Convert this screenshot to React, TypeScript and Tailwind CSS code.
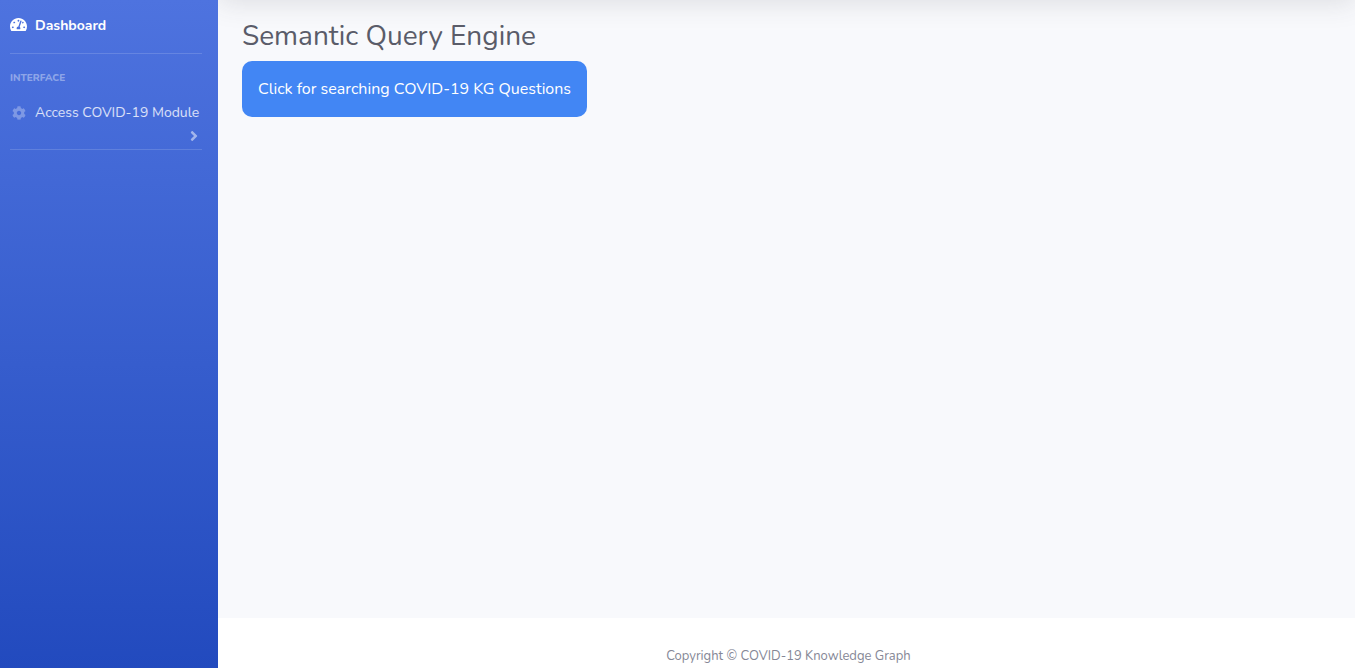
import { FaTachometerAlt, FaCog, FaAngleRight } from "react-icons/fa";

export default function App() {
  return (
    <div className="flex min-h-screen bg-[#f8f9fc] font-['Nunito','Open_Sans',sans-serif]">
      <aside className="w-[218px] shrink-0 bg-linear-to-b from-[#4e73df] to-[#224abe] px-[10px] text-white">
        <nav className="pr-[6px]">
          <a href="#dashboard" className="flex h-[53px] items-center gap-2 pb-[2px] text-sm font-bold">
            <FaTachometerAlt className="mb-[2px] size-[17px]" />
            <span>Dashboard</span>
          </a>
          <hr className="border-white/15" />
          <h2 className="pt-4 text-[10px] leading-4 font-extrabold text-white/40 uppercase">Interface</h2>
          <button type="button" className="block w-full pt-[15px] pb-[2px] text-left text-sm whitespace-nowrap text-white/80">
            <span className="flex h-6 items-center gap-2">
              <FaCog className="mr-px ml-[2px] size-[14px] text-white/30" />
              <span>Access COVID-19 Module</span>
            </span>
            <span className="flex h-[22px] items-center justify-end text-white/50">
              <FaAngleRight className="size-4" />
            </span>
          </button>
          <hr className="border-white/15" />
        </nav>
      </aside>
      <div className="flex min-w-0 grow flex-col overflow-hidden">
        <header className="-mt-[70px] h-[70px] shrink-0 bg-white shadow-[0_2px_28px_0_rgba(58,59,69,0.15)]" />
        <main className="grow px-6 pt-[19px]">
          <h1 className="text-[28px] leading-[34px] font-normal text-[#5a5c69]">Semantic Query Engine</h1>
          <button type="button" className="mt-2 h-14 rounded-[10px] bg-[#4286f4] px-4 text-base text-white">
            Click for searching COVID-19 KG Questions
          </button>
        </main>
        <footer className="h-[50px] bg-white pt-[30px] pl-1 text-center text-[13px] leading-4 text-[#858796]">
          Copyright © COVID-19 Knowledge Graph
        </footer>
      </div>
    </div>
  );
}
